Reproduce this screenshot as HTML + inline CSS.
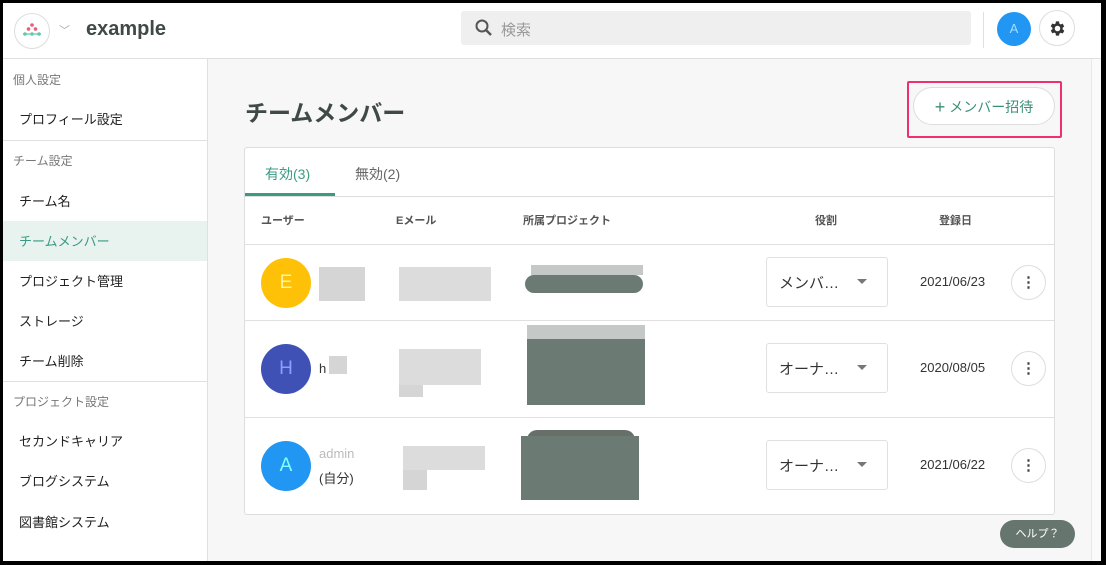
<!DOCTYPE html>
<html><head><meta charset="utf-8"><style>
*{box-sizing:border-box;margin:0;padding:0}
body{width:1106px;height:565px;overflow:hidden;background:#000;font-family:"Liberation Sans","Noto Sans CJK JP",sans-serif;position:relative}
.frame{position:absolute;left:3px;top:3px;width:1098px;height:558px;background:#f7f7f7;overflow:hidden}
.a{position:absolute}
.hdr{left:0;top:0;width:1098px;height:56px;background:#fff;border-bottom:1px solid #e0e0e0}
.side{left:0;top:56px;width:205px;height:510px;background:#fff;border-right:1px solid #e0e0e0}
.sec{position:absolute;left:10px;font-size:12px;color:#777}
.it{position:absolute;left:16px;font-size:13px;color:#222}
.card{left:241px;top:144px;width:811px;height:368px;background:#fff;border:1px solid #ddd;border-radius:3px}
.th{position:absolute;top:64px;font-size:11px;font-weight:bold;color:#555}
.row{position:absolute;left:0;width:809px;border-top:1px solid #e0e0e0}
.av{position:absolute;left:16px;width:50px;height:50px;border-radius:50%;color:#fff;font-size:19px;text-align:center;line-height:50px}
.sel{position:absolute;left:521px;width:122px;height:50px;border:1px solid #e0e0e0;border-radius:3px;font-size:15px;color:#333;padding:14px 0 0 12px}
.sel:after{content:"";position:absolute;left:90px;top:21px;border:5px solid transparent;border-top-color:#777}
.dt{position:absolute;left:675px;font-size:13px;color:#333}
.km{position:absolute;left:766px;width:35px;height:35px;border:1px solid #ddd;border-radius:50%;text-align:center;line-height:33px;font-size:15px;font-weight:bold;color:#444}
.g{position:absolute;background:#d5d5d5}
.d{position:absolute;background:#6c7a74}
</style></head><body>
<div class="frame">
<div class="a hdr">
 <div class="a" style="left:11px;top:10px;width:36px;height:36px;border:1px solid #ddd;border-radius:50%">
  <svg width="36" height="36" viewBox="0 0 36 36" style="position:absolute;left:-1px;top:-1px"><g fill="#ee5a79"><circle cx="18" cy="12" r="1.8"/><circle cx="14.5" cy="16" r="1.8"/><circle cx="21.5" cy="16" r="1.8"/></g><line x1="9" y1="21" x2="27" y2="21" stroke="#66c7ad" stroke-width="1.3"/><g fill="#66c7ad"><circle cx="11" cy="21" r="1.8"/><circle cx="18" cy="21" r="1.8"/><circle cx="25" cy="21" r="1.8"/></g></svg>
 </div>
 <div class="a" style="left:56px;top:19px;color:#aaa;font-size:11px">﹀</div>
 <div class="a" style="left:83px;top:15px;font-size:20px;font-weight:bold;color:#3f4a48">example</div>
 <div class="a" style="left:458px;top:8px;width:510px;height:34px;background:#efefef;border-radius:3px">
  <svg class="a" style="left:13px;top:7px" width="20" height="20" viewBox="0 0 20 20"><circle cx="8" cy="8" r="5.5" fill="none" stroke="#555" stroke-width="2"/><line x1="12" y1="12" x2="17" y2="17" stroke="#555" stroke-width="2.4"/></svg>
  <div class="a" style="left:40px;top:8px;font-size:15px;color:#999">検索</div>
 </div>
 <div class="a" style="left:980px;top:9px;width:1px;height:36px;background:#e0e0e0"></div>
 <div class="a" style="left:994px;top:9px;width:34px;height:34px;border-radius:50%;background:#2196f3;color:#9fe0ff;font-size:13px;text-align:center;line-height:34px">A</div>
 <div class="a" style="left:1036px;top:7px;width:36px;height:36px;border:1px solid #ddd;border-radius:50%">
  <svg class="a" style="left:8px;top:8px" width="19" height="19" viewBox="0 0 24 24"><path fill="#333" d="M19.4 13a7.5 7.5 0 000-2l2.1-1.6-2-3.5-2.5 1a7.3 7.3 0 00-1.700-1L15 3h-4l-.4 2.7a7.3 7.3 0 00-1.7 1l-2.5-1-2 3.5L6.6 11a7.5 7.5 0 000 2l-2.1 1.6 2 3.5 2.5-1a7.3 7.3 0 001.7 1L11 21h4l.4-2.7a7.3 7.3 0 001.7-1l2.5 1 2-3.5zM13 15.5a3.5 3.5 0 110-7 3.5 3.5 0 010 7z" transform="translate(-1 0)"/></svg>
 </div>
</div>
<div class="a side">
 <div class="sec" style="top:12px">個人設定</div>
 <div class="it" style="top:50px">プロフィール設定</div>
 <div class="a" style="left:0;top:81px;width:205px;height:1px;background:#e0e0e0"></div>
 <div class="sec" style="top:93px">チーム設定</div>
 <div class="it" style="top:132px">チーム名</div>
 <div class="a" style="left:0;top:162px;width:204px;height:40px;background:#e8f2ef"></div>
 <div class="it" style="top:172px;color:#3a9b82">チームメンバー</div>
 <div class="it" style="top:212px">プロジェクト管理</div>
 <div class="it" style="top:252px">ストレージ</div>
 <div class="it" style="top:292px">チーム削除</div>
 <div class="a" style="left:0;top:322px;width:205px;height:1px;background:#e0e0e0"></div>
 <div class="sec" style="top:334px">プロジェクト設定</div>
 <div class="it" style="top:372px">セカンドキャリア</div>
 <div class="it" style="top:412px">ブログシステム</div>
 <div class="it" style="top:453px">図書館システム</div>
</div>
<div class="a" style="left:242px;top:91px;font-size:23px;font-weight:bold;color:#3f4a48">チームメンバー</div>
<div class="a" style="left:904px;top:78px;width:155px;height:57px;border:2px solid #f0306e;border-radius:2px"></div>
<div class="a" style="left:910px;top:84px;width:142px;height:38px;border:1px solid #ddd;border-radius:19px;background:#fff;color:#3a8f79;font-size:14px;text-align:center;line-height:38px"><span style="font-size:18px;vertical-align:-1px">+</span>&nbsp;メンバー招待</div>
<div class="a card">
 <div class="a" style="left:20px;top:16px;font-size:14px;color:#3a9b82">有効(3)</div>
 <div class="a" style="left:110px;top:16px;font-size:14px;color:#666">無効(2)</div>
 <div class="a" style="left:0;top:45px;width:90px;height:3px;background:#3a9b82"></div>
 <div class="a" style="left:0;top:48px;width:809px;height:1px;background:#ddd"></div>
 <div class="th" style="left:16px">ユーザー</div>
 <div class="th" style="left:151px">Eメール</div>
 <div class="th" style="left:278px">所属プロジェクト</div>
 <div class="th" style="left:570px">役割</div>
 <div class="th" style="left:694px">登録日</div>
 <div class="row" style="top:96px;height:76px">
  <div class="av" style="top:13px;background:#ffc107;color:#fff59d">E</div>
  <div class="g" style="left:74px;top:22px;width:46px;height:34px"></div>
  <div class="g" style="left:154px;top:22px;width:92px;height:34px;background:#dcdcdc"></div>
  <div class="g" style="left:286px;top:20px;width:112px;height:10px;background:#c4c8c6"></div>
  <div class="d" style="left:280px;top:30px;width:118px;height:18px;border-radius:9px"></div>
  <div class="sel" style="top:12px">メンバ…</div>
  <div class="dt" style="top:29px">2021/06/23</div>
  <div class="km" style="top:20px">⋮</div>
 </div>
 <div class="row" style="top:172px;height:97px">
  <div class="av" style="top:23px;background:#3f51b5;color:#8c9eff">H</div>
  <div class="a" style="left:74px;top:40px;font-size:13px;color:#333">h</div>
  <div class="g" style="left:84px;top:35px;width:18px;height:18px"></div>
  <div class="g" style="left:154px;top:28px;width:82px;height:36px;background:#dcdcdc"></div>
  <div class="g" style="left:154px;top:64px;width:24px;height:12px"></div>
  <div class="g" style="left:282px;top:4px;width:118px;height:14px;background:#c4c8c6"></div>
  <div class="d" style="left:282px;top:18px;width:118px;height:66px"></div>
  <div class="sel" style="top:22px">オーナ…</div>
  <div class="dt" style="top:39px">2020/08/05</div>
  <div class="km" style="top:30px">⋮</div>
 </div>
 <div class="row" style="top:269px;height:97px">
  <div class="av" style="top:23px;background:#2196f3;color:#84ffff">A</div>
  <div class="a" style="left:74px;top:28px;font-size:13px;color:#bbb">admin</div>
  <div class="a" style="left:74px;top:50px;font-size:13px;color:#333">(自分)</div>
  <div class="g" style="left:158px;top:28px;width:82px;height:24px;background:#dcdcdc"></div>
  <div class="g" style="left:158px;top:52px;width:24px;height:20px"></div>
  <div class="d" style="left:282px;top:12px;width:108px;height:20px;border-radius:10px;background:#667069"></div>
  <div class="d" style="left:276px;top:18px;width:118px;height:64px"></div>
  <div class="sel" style="top:22px">オーナ…</div>
  <div class="dt" style="top:39px">2021/06/22</div>
  <div class="km" style="top:30px">⋮</div>
 </div>
</div>
<div class="a" style="left:997px;top:517px;width:75px;height:28px;border-radius:14px;background:#66766f;color:#fff;font-size:11px;text-align:center;line-height:28px">ヘルプ？</div>
<div class="a" style="left:1088px;top:56px;width:10px;height:510px;background:#fafafa;border-left:1px solid #e8e8e8"></div>
</div>
</body></html>
